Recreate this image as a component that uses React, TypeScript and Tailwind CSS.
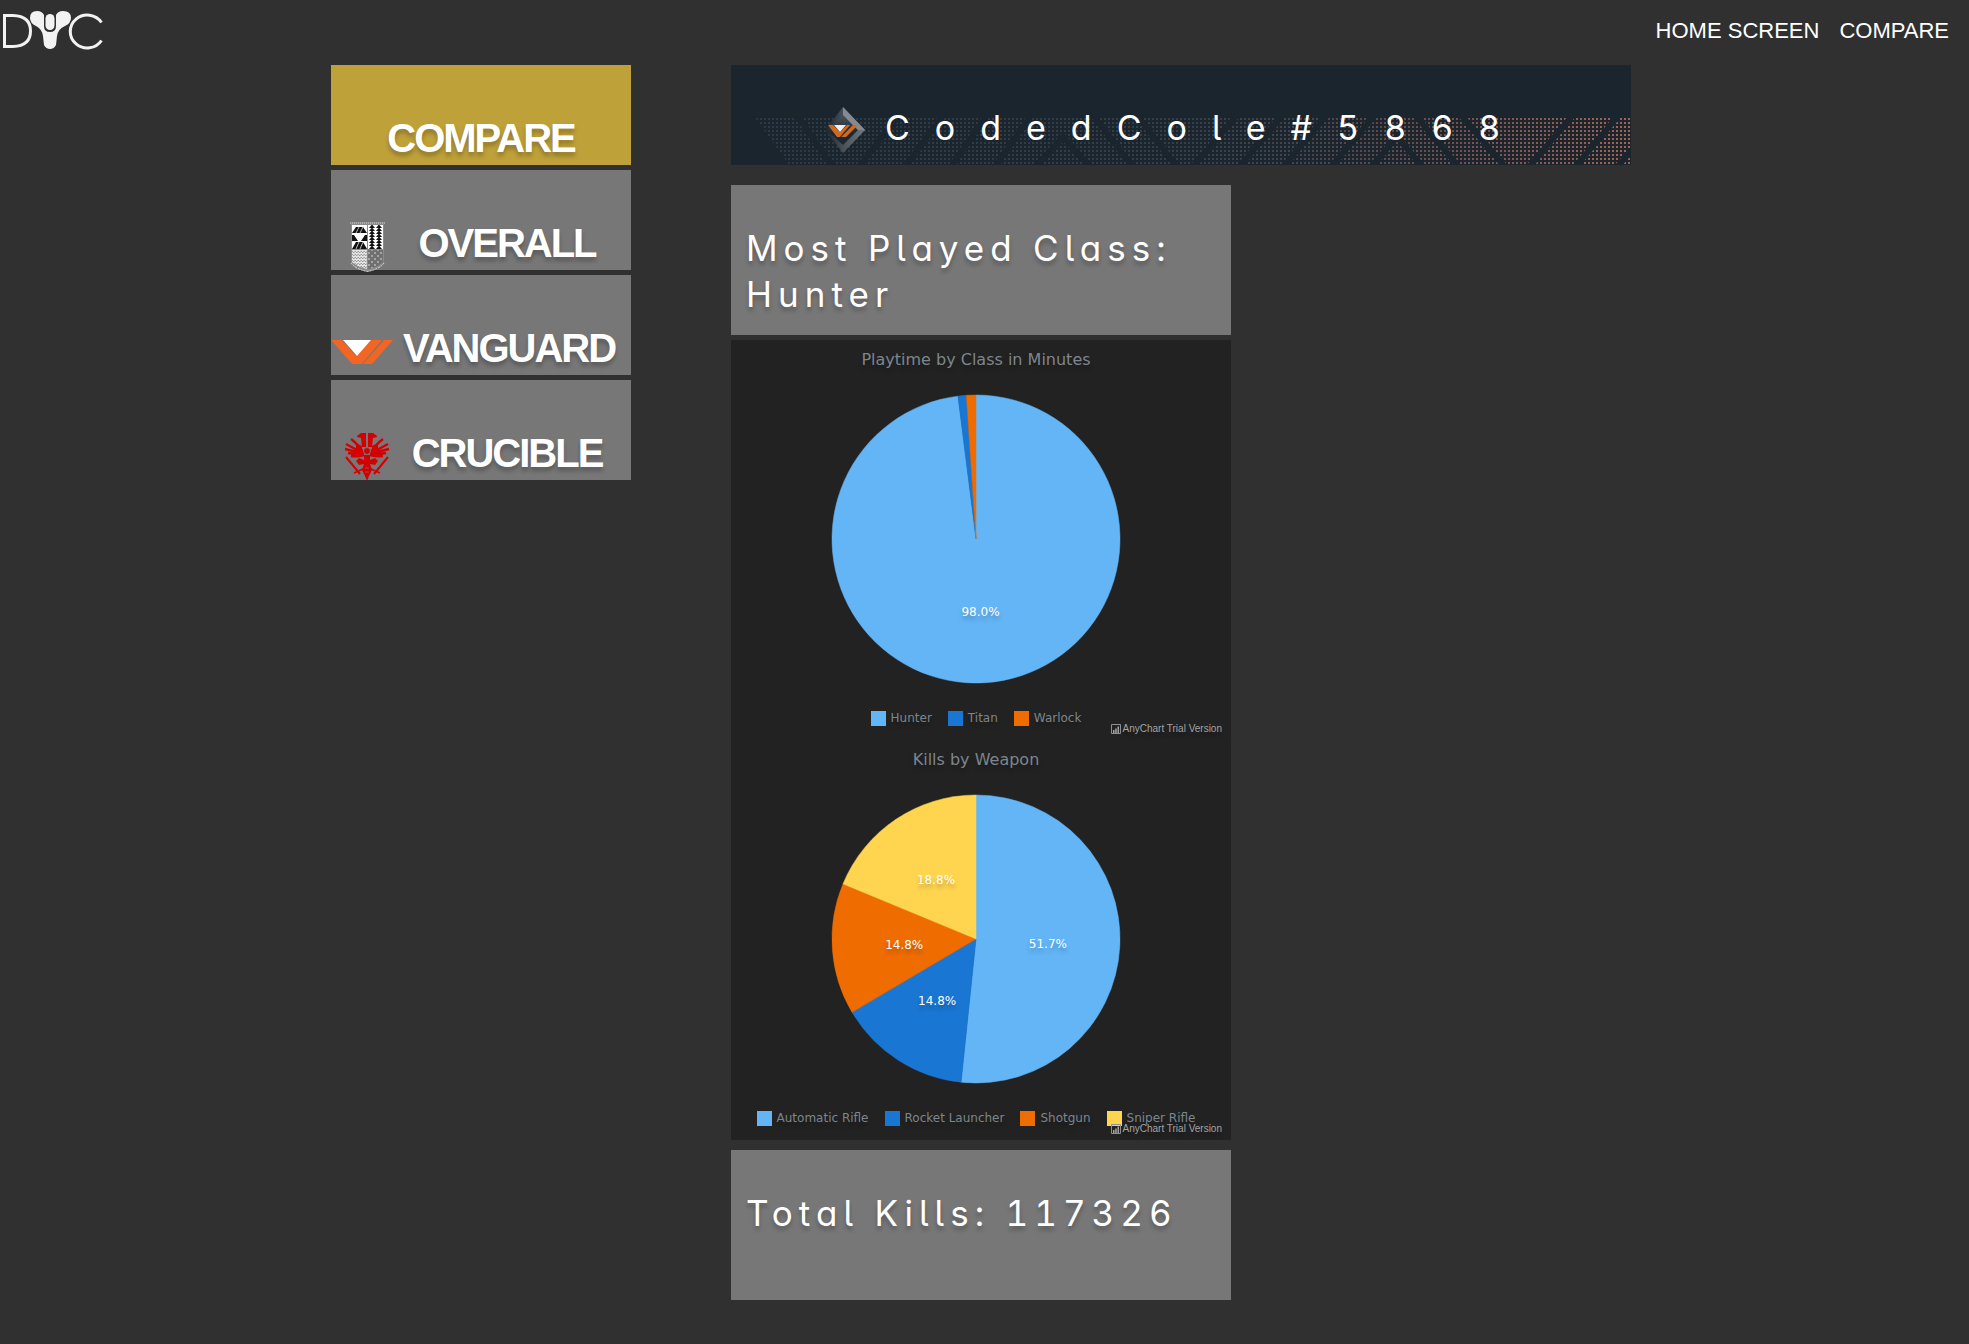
import React from "react";

type Slice = { name: string; value: number; label?: string; color: string };

const classes: Slice[] = [
  { name: "Hunter", value: 98, label: "98.0%", color: "#64b5f6" },
  { name: "Titan", value: 0.93, color: "#1976d2" },
  { name: "Warlock", value: 1.07, color: "#ef6c00" },
];

const weapons: Slice[] = [
  { name: "Automatic Rifle", value: 51.65, label: "51.7%", color: "#64b5f6" },
  { name: "Rocket Launcher", value: 14.85, label: "14.8%", color: "#1976d2" },
  { name: "Shotgun", value: 14.75, label: "14.8%", color: "#ef6c00" },
  { name: "Sniper Rifle", value: 18.75, label: "18.8%", color: "#ffd54f" },
];

const R = 144;

function point(fraction: number, radius: number) {
  const a = fraction * Math.PI * 2;
  return [Math.sin(a) * radius, -Math.cos(a) * radius];
}

function Pie({ slices }: { slices: Slice[] }) {
  const total = slices.reduce((s, d) => s + d.value, 0);
  let acc = 0;
  const parts = slices.map((d) => {
    const start = acc / total;
    acc += d.value;
    const end = acc / total;
    const [x1, y1] = point(start, R);
    const [x2, y2] = point(end, R);
    const [lx, ly] = point((start + end) / 2, R / 2);
    const large = end - start > 0.5 ? 1 : 0;
    return { ...d, path: `M0 0L${x1} ${y1}A${R} ${R} 0 ${large} 1 ${x2} ${y2}Z`, lx, ly };
  });
  return (
    <svg viewBox="-145 -145 290 290" className="size-[290px] overflow-visible">
      {parts.map((p) => (
        <path key={p.name} d={p.path} fill={p.color} stroke={p.color} strokeWidth="0.5" />
      ))}
      {parts.map((p) =>
        p.label ? (
          <text key={p.name} x={p.lx} y={p.ly + 5} textAnchor="middle" fill="#fff" className="text-[12px]">
            {p.label}
          </text>
        ) : null,
      )}
    </svg>
  );
}

function Chart({ title, slices }: { title: string; slices: Slice[] }) {
  return (
    <section className="relative flex h-[400px] flex-col items-center bg-[#222222] pr-2.5 font-['DejaVu_Sans',sans-serif] text-[#7c868e] [text-shadow:0_4px_4px_rgba(0,0,0,0.25)]">
      <h2 className="mt-2 text-[16px] leading-6">{title}</h2>
      <div className="mt-[22px]">
        <Pie slices={slices} />
      </div>
      <ul className="mt-[26px] flex gap-4 text-[12px] leading-4">
        {slices.map((d) => (
          <li key={d.name} className="flex items-center gap-[5px] whitespace-nowrap">
            <span className="size-[15px]" style={{ backgroundColor: d.color }} />
            {d.name}
          </li>
        ))}
      </ul>
      <a
        href="#anychart"
        className="absolute right-[9px] bottom-[5px] flex items-center gap-0.5 font-['Liberation_Sans',Arial,sans-serif] text-[10px] leading-3 whitespace-nowrap text-[#a3a3a3]"
      >
        <svg viewBox="0 0 10 10" className="size-2.5">
          <path d="M.5.5h9v9h-9z" fill="none" stroke="#8f8f8f" />
          <path d="M2 6h1.5v3H2zM4.2 4.5h1.5V9H4.2zM6.5 2.5H8V9H6.5z" fill="#a3a3a3" />
        </svg>
        AnyChart Trial Version
      </a>
    </section>
  );
}

function Logo() {
  return (
    <svg viewBox="0 0 104 40" className="h-10 w-[104px]">
      <g fill="none" stroke="#f2f2f2" strokeWidth="3">
        <path d="M4.500 5.500H13Q30.500 6 30.500 21T13 36.500H4.500Z" />
        <path d="M101.500 12.500A17 16.500 0 1 0 101.500 30.500" />
      </g>
      <path
        d="M30 8Q30 1 37 1Q42 1 44 5V16Q44 22 50 22T56 16V5Q58 1 63 1Q71 1 71 8Q71 13 65 16Q58 19 57 26L56 35Q54 39 50 39T44 35L43 26Q42 19 36 16Q30 13 30 8Z"
        fill="#f2f2f2"
      />
      <rect x="45.500" y="4" width="9" height="16" rx="4.500" fill="#f2f2f2" />
    </svg>
  );
}

function VanguardMark({ className }: { className: string }) {
  return (
    <svg viewBox="0 0 62 24" className={className}>
      <path d="M0 0H11L25 16 39 0H51L31 24H21Z" fill="#f26522" />
      <path d="M53 0H62L41 24H32Z" fill="#f26522" />
      <path d="M12 0H40L26 16Z" fill="#fff" />
    </svg>
  );
}

function ShieldMark() {
  return (
    <svg viewBox="0 0 35 50" className="h-[50px] w-[35px]">
      <defs>
        <pattern id="zig" x="19" y="3" width="7" height="3" patternUnits="userSpaceOnUse">
          <path d="M0 0H7V3H0Z" fill="#fff" />
          <path d="M2.500 0H3.500L6 3H0Z" fill="#111" />
        </pattern>
        <pattern id="fine" width="3" height="3" patternUnits="userSpaceOnUse">
          <path d="M0 0H3V3H0Z" fill="#e4e4e4" />
          <path d="M0 0H1.500V1H0ZM1.500 2H3V3H1.500Z" fill="#999" />
        </pattern>
        <pattern id="check" width="6" height="6" patternUnits="userSpaceOnUse">
          <path d="M0 0H6V6H0Z" fill="#707070" />
          <path d="M0 0H2V2H0ZM3 3H5V5H3Z" fill="#a4a4a4" />
        </pattern>
      </defs>
      <path d="M0 0H35L34 3V41Q30 47 17.500 50Q5 47 1 41V3Z" fill="#8b8b8b" />
      <path d="M2 3H17V27H2Z" fill="#fff" />
      <path d="M18 3H33V27H18Z" fill="url(#zig)" />
      <path d="M2 28H17V47Q7 45 2 40Z" fill="url(#fine)" />
      <path d="M18 28H33V40Q29 45 18 47Z" fill="url(#check)" />
      <path
        d="M2 11L6 5H13L17 11ZM2 13H4L8 19H2ZM17 13H15L11 19H17ZM2 27L6 20H13L17 27Z"
        fill="#111"
      />
      <path d="M6 11L9 5M10 11L13 5M6 27L9 20M10 27L13 20" stroke="#fff" strokeWidth="0.700" />
      <path d="M1 41Q5 47 17.500 49.500Q30 47 34 41" fill="none" stroke="#ddd" strokeDasharray="2 1" />
      <path d="M0 1H35" stroke="#ccc" strokeDasharray="1 1" />
    </svg>
  );
}

function CrucibleMark() {
  return (
    <svg viewBox="0 0 46 48" className="h-12 w-[46px]">
      <g fill="none" stroke="#d40000" strokeWidth="2.400">
        <path d="M20 21Q14 11 7 6M19 21Q10 15 2 11M19 21Q10 18 1 16M19 22Q11 21 4 20M20 22Q13 24 7 23" />
        <path d="M26 21Q32 11 39 6M27 21Q36 15 44 11M27 21Q36 18 45 16M27 22Q35 21 42 20M26 22Q33 24 39 23" />
      </g>
      <g fill="#d40000">
        <path d="M13 3L17 0H22V14H18L17 5 13 4Z" />
        <path d="M33 3L29 0H24V14H28L29 5 33 4Z" />
        <path d="M12 10L18 13 18 23 12 20ZM34 10L28 13 28 23 34 20Z" />
        <path d="M20 22H26V27L31 25 34 28 31 32 26 31 28 37 25 43 23 48 21 43 18 37 20 31 15 32 12 28 15 25 20 27Z" />
      </g>
      <circle cx="23" cy="18" r="3.500" fill="#d40000" stroke="#777777" strokeWidth="1" />
      <g fill="none" stroke="#d40000">
        <path d="M2 24L16 41M44 24L30 41" strokeWidth="2" />
        <path d="M10 40L19 36M36 40L27 36" strokeWidth="1.500" />
      </g>
      <path d="M21 35H25M21 39H25" stroke="#777777" strokeWidth="0.700" />
    </svg>
  );
}

function BannerEmblem() {
  return (
    <svg viewBox="0 0 40 46" className="h-[46px] w-10">
      <defs>
        <linearGradient id="edge">
          <stop offset="0" stopColor="#1b252e" />
          <stop offset="0.5" stopColor="#4c545c" />
          <stop offset="1" stopColor="#707880" />
        </linearGradient>
        <linearGradient id="core" x1="0" x2="0" y1="0" y2="1">
          <stop offset="0" stopColor="#4a535c" />
          <stop offset="0.6" stopColor="#1b2833" />
        </linearGradient>
      </defs>
      <path d="M18 0L40 23 18 46 0 23Z" fill="url(#edge)" />
      <path d="M18 8L33 23 18 38 2 23Z" fill="url(#core)" />
      <path d="M18 0L40 23H33L18 8Z" fill="#858a91" />
      <path d="M3 18H8L15 25 22 18H25L15 30H12ZM28 18H33L21 30H16Z" fill="#d4691e" />
      <path d="M9 18H21L15 25Z" fill="#f2eef0" />
    </svg>
  );
}

function BannerDots() {
  return (
    <svg viewBox="0 0 900 48" preserveAspectRatio="xMaxYMax slice" className="absolute bottom-0 left-0 h-12 w-full">
      <defs>
        <linearGradient id="heat" gradientUnits="userSpaceOnUse" x1="0" x2="900" y1="0" y2="0">
          <stop offset="0" stopColor="#2a3945" />
          <stop offset="0.5" stopColor="#333f4a" />
          <stop offset="0.65" stopColor="#4b454c" />
          <stop offset="0.85" stopColor="#82544e" />
          <stop offset="1" stopColor="#a9624e" />
        </linearGradient>
        <pattern id="dots" width="4" height="4" patternUnits="userSpaceOnUse">
          <path d="M1 1H3V3H1Z" fill="#fff" />
        </pattern>
        <mask id="dotMask">
          <path d="M24 0H900V48H58Z" fill="url(#dots)" />
        </mask>
      </defs>
      <path d="M0 0H900V48H0Z" fill="url(#heat)" mask="url(#dotMask)" />
      <g fill="none" stroke="#1b252e" strokeWidth="6">
        <path d="M66 -2L102 50M168 -2L128 50M212 -2L174 50M256 -2L220 50M300 -2L264 50" />
        <path d="M362 -2L402 50M406 -2L446 50M506 -2L462 50M552 -2L508 50M596 -2L552 50M644 -2L600 50" />
        <path d="M684 -2L728 50M730 -2L774 50M842 -2L798 50M888 -2L844 50M900 34L886 50" />
        <path d="M304 50L332 20 360 50M640 50L666 20 692 50" />
      </g>
    </svg>
  );
}

const card =
  "flex h-[100px] items-end overflow-visible text-[40px] leading-[54px] font-bold tracking-tighter text-white [text-shadow:0_4px_4px_rgba(0,0,0,0.25)]";

const displayText =
  "font-['Inter',sans-serif] leading-[46px] font-normal text-white [font-feature-settings:'cv11','cv05','tnum']";

function SideLink({ href, label, icon }: { href: string; label: string; icon: React.ReactNode }) {
  return (
    <a href={href} className={`${card} bg-[#777777]`}>
      <span className="flex h-[47px] w-[72px] shrink-0 items-center justify-center">{icon}</span>
      <span className="flex-1 pr-5 text-center">{label}</span>
    </a>
  );
}

function Stat({ children }: { children: React.ReactNode }) {
  return (
    <p
      className={`min-h-[150px] bg-[#777777] px-[15px] pt-10 pb-4 text-[35px] tracking-[6px] [text-shadow:0_4px_4px_rgba(0,0,0,0.25)] ${displayText}`}
    >
      {children}
    </p>
  );
}

export default function App() {
  return (
    <div className="min-h-screen bg-[#303030] pb-11 font-['Liberation_Sans',Arial,sans-serif]">
      <header className="flex h-[65px] items-start justify-between pr-5">
        <a href="#home" aria-label="DVC home" className="pt-2.5">
          <Logo />
        </a>
        <nav className="flex gap-5 pt-[18px] text-[22px] leading-[26px] text-white">
          <a href="#home">HOME SCREEN</a>
          <a href="#compare">COMPARE</a>
        </nav>
      </header>
      <div className="flex items-start justify-center gap-[100px] pr-[7px]">
        <aside className="flex w-[300px] shrink-0 flex-col gap-[5px]">
          <a href="#compare" className={`${card} justify-center bg-[#bfa13a]`}>
            COMPARE
          </a>
          <SideLink href="#overall" label="OVERALL" icon={<ShieldMark />} />
          <SideLink href="#vanguard" label="VANGUARD" icon={<VanguardMark className="mr-2.5 h-6 w-[62px]" />} />
          <SideLink href="#crucible" label="CRUCIBLE" icon={<CrucibleMark />} />
        </aside>
        <main className="w-full max-w-[900px]">
          <div className="relative h-[100px] bg-[#1b252e]">
            <BannerDots />
            <div className="relative flex items-end gap-5 pt-10 pl-[94px]">
              <h1 className={`order-2 text-[34px] tracking-[25px] whitespace-nowrap ${displayText}`}>
                CodedCole#5868
              </h1>
              <span className="-mb-0.5">
                <BannerEmblem />
              </span>
            </div>
          </div>
          <div className="mt-5 w-[500px] max-w-full">
            <Stat>Most Played Class: Hunter</Stat>
            <div className="mt-[5px] mb-2.5">
              <Chart title="Playtime by Class in Minutes" slices={classes} />
              <Chart title="Kills by Weapon" slices={weapons} />
            </div>
            <Stat>Total Kills: 117326</Stat>
          </div>
        </main>
      </div>
    </div>
  );
}
